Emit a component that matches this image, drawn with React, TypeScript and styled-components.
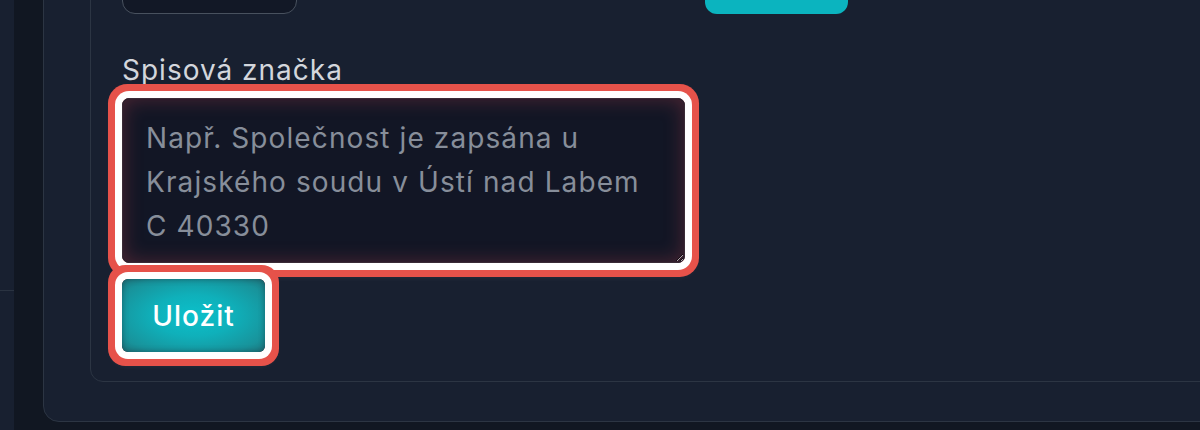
import React from "react";
import styled, { createGlobalStyle } from "styled-components";

const GlobalStyle = createGlobalStyle`
  html, body {
    margin: 0;
    padding: 0;
    background: #111722;
    overflow: hidden;
  }
  body {
    font-family: Inter, "Noto Sans", "Liberation Sans", sans-serif;
    -webkit-font-smoothing: antialiased;
  }
`;

const App = () => {
  return (
    <>
      <GlobalStyle />
      <Page>
        <Sidebar>
          <SidebarItem />
        </Sidebar>
        <Main>
          <OuterCard>
            <InnerCard>
              <TopRow>
                <SmallInput />
                <span />
                <TopButton />
              </TopRow>
              <Label htmlFor="spis">Spisová značka</Label>
              <Highlight $radius={7}>
                <TextArea
                  id="spis"
                  placeholder={
                    "Např. Společnost je zapsána u\nKrajského soudu v Ústí nad Labem\nC 40330"
                  }
                />
              </Highlight>
              <ButtonRow>
                <Highlight $radius={6}>
                  <SaveButton>Uložit</SaveButton>
                </Highlight>
              </ButtonRow>
            </InnerCard>
          </OuterCard>
        </Main>
      </Page>
    </>
  );
};

export default App;

const Page = styled.div`
  display: flex;
  height: 430px;
  width: 1200px;
  overflow: hidden;
`;

const Sidebar = styled.aside`
  flex: 0 0 14px;
  height: 100%;
  background: #182030;
`;

const SidebarItem = styled.div`
  height: 290px;
  border-bottom: 1px solid #2a3341;
`;

const Main = styled.main`
  flex: 0 0 auto;
  margin-left: 29px;
  margin-top: -116px;
`;

const OuterCard = styled.section`
  width: 1240px;
  background: #182030;
  border: 1px solid #2c3543;
  border-radius: 16px;
  padding: 40px 46px 39px 46px;
`;

const InnerCard = styled.div`
  background: #182030;
  border: 1px solid #2c3543;
  border-radius: 13px;
  padding: 32px 31px 29px 31px;
`;

const TopRow = styled.div`
  display: grid;
  grid-template-columns: 175px 408px 143px;
  align-items: end;
  height: 56px;
`;

const SmallInput = styled.div`
  height: 56px;
  box-sizing: border-box;
  background: #121826;
  border: 1.5px solid #48515e;
  border-radius: 13px;
`;

const TopButton = styled.div`
  height: 56px;
  background: #0bb4bf;
  border-radius: 12px;
`;

const Label = styled.label`
  display: block;
  margin-top: 40px;
  margin-bottom: 12px;
  font-size: 28px;
  line-height: 32px;
  color: #d3d6dc;
  letter-spacing: 1px;
`;

const Highlight = styled.div<{ $radius: number }>`
  display: inline-flex;
  border-radius: ${(p) => p.$radius}px;
  box-shadow: 0 0 0 7px #ffffff, 0 0 0 14px #e6524a,
    0 3px 10px 8px rgba(255, 255, 255, 0.15);
`;

const TextArea = styled.textarea`
  display: block;
  width: 563px;
  height: 165px;
  box-sizing: border-box;
  margin: 0;
  padding: 17px 23px 16px;
  border: 1px solid #3a2b36;
  border-radius: 7px;
  background: #121625;
  box-shadow: inset 0 0 20px rgba(205, 70, 80, 0.32);
  color: #e5e7eb;
  font-family: Inter, "Noto Sans", "Liberation Sans", sans-serif;
  font-size: 28px;
  line-height: 44px;
  letter-spacing: 1.1px;
  color-scheme: dark;
  resize: both;
  outline: none;

  &::placeholder {
    color: #878e9a;
    opacity: 1;
  }
`;

const ButtonRow = styled.div`
  display: flex;
  margin-top: 16px;
`;

const SaveButton = styled.button`
  width: 143px;
  height: 73px;
  border: 0;
  border-radius: 6px;
  padding: 0;
  background: radial-gradient(
    ellipse at center,
    #0bc0ca 0%,
    #0fb0ba 40%,
    #18939b 80%,
    #1e7880 100%
  );
  box-shadow: inset 0 0 6px rgba(20, 30, 40, 0.45);
  color: #ffffff;
  font-family: Inter, "Noto Sans", "Liberation Sans", sans-serif;
  font-size: 28px;
  font-weight: 500;
  letter-spacing: 1px;
  cursor: pointer;
`;
